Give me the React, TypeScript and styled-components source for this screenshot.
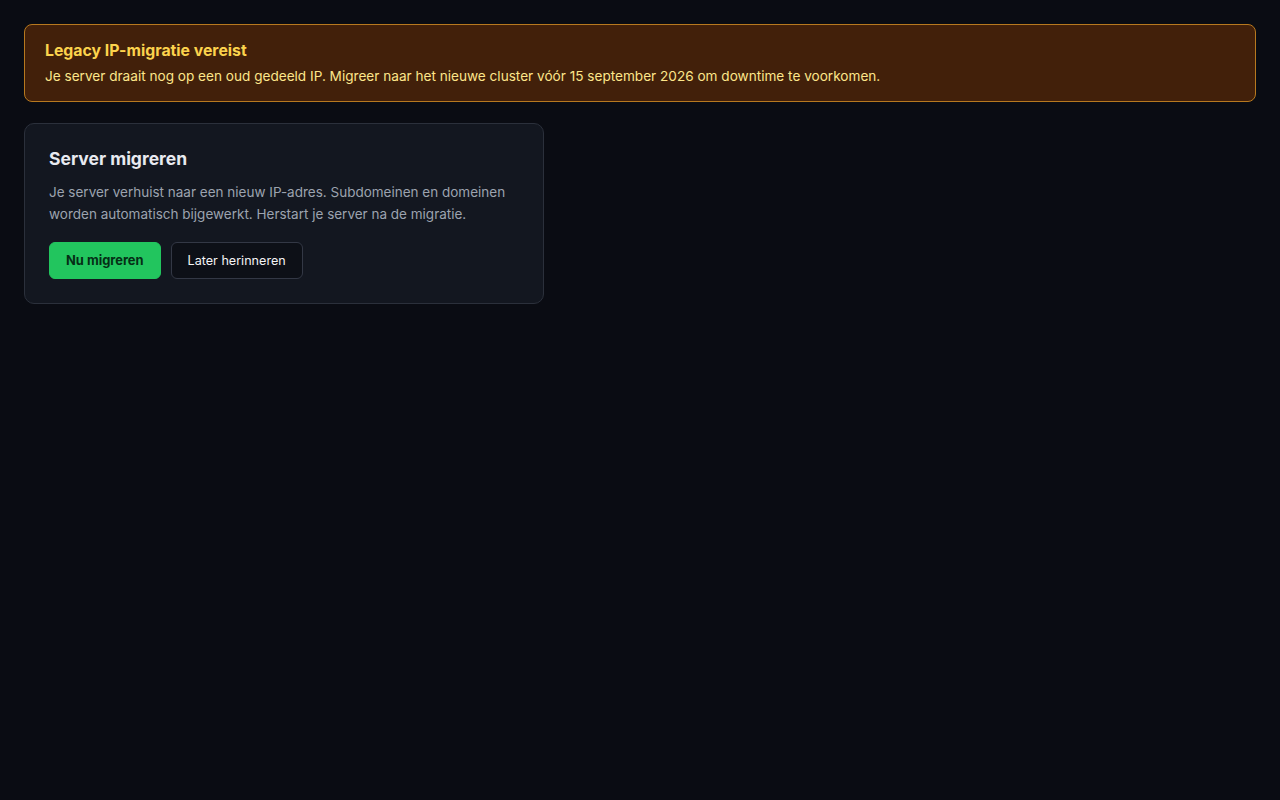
import React from "react";
import styled, { createGlobalStyle } from "styled-components";

const GlobalStyle = createGlobalStyle`
  * { box-sizing: border-box; }
  html, body {
    margin: 0;
    padding: 0;
    background: #0a0c13;
    font-family: Inter, "Noto Sans", "Liberation Sans", sans-serif;
  }
`;

const Page = styled.div`
  min-height: 100vh;
  padding: 24px;
  display: flex;
  flex-direction: column;
  align-items: flex-start;
  gap: 21px;
`;

const Banner = styled.div`
  width: 100%;
  padding: 16px 20px 15px;
  border: 1px solid #b7791f;
  border-radius: 8px;
  background: #42200a;
  display: flex;
  flex-direction: column;
  gap: 5px;
`;

const BannerTitle = styled.div`
  font-size: 15.8px;
  line-height: 20px;
  font-weight: 700;
  color: #fcd34d;
`;

const BannerText = styled.div`
  font-size: 13.6px;
  line-height: 20px;
  color: #fde68a;
`;

const Card = styled.div`
  width: 520px;
  padding: 24px;
  border: 1px solid #2b303b;
  border-radius: 10px;
  background: #131720;
`;

const CardTitle = styled.h2`
  margin: 0 0 11px;
  font-size: 17.5px;
  line-height: 22px;
  font-weight: 700;
  color: #e8eaf0;
`;

const CardText = styled.p`
  margin: 0 0 17px;
  font-size: 13.5px;
  line-height: 22px;
  color: #9ca3af;
`;

const Actions = styled.div`
  display: flex;
  gap: 10px;
`;

const Button = styled.button<{ $primary?: boolean }>`
  height: 37px;
  padding: 0 16px;
  border-radius: 6px;
  font-family: inherit;
  font-size: ${(p) => (p.$primary ? "12.9px" : "12.6px")};
  font-weight: ${(p) => (p.$primary ? 700 : 400)};
  cursor: pointer;
  border: 1px solid ${(p) => (p.$primary ? "#22c55e" : "#333845")};
  background: ${(p) => (p.$primary ? "#22c55e" : "#0d1017")};
  color: ${(p) => (p.$primary ? "#052e16" : "#f3f4f6")};
`;

export default function App() {
  return (
    <>
      <GlobalStyle />
      <Page>
        <Banner>
          <BannerTitle>Legacy IP-migratie vereist</BannerTitle>
          <BannerText>
            Je server draait nog op een oud gedeeld IP. Migreer naar het nieuwe cluster vóór 15 september 2026 om
            downtime te voorkomen.
          </BannerText>
        </Banner>
        <Card>
          <CardTitle>Server migreren</CardTitle>
          <CardText>
            Je server verhuist naar een nieuw IP-adres. Subdomeinen en domeinen worden automatisch bijgewerkt.
            Herstart je server na de migratie.
          </CardText>
          <Actions>
            <Button $primary>Nu migreren</Button>
            <Button>Later herinneren</Button>
          </Actions>
        </Card>
      </Page>
    </>
  );
}
